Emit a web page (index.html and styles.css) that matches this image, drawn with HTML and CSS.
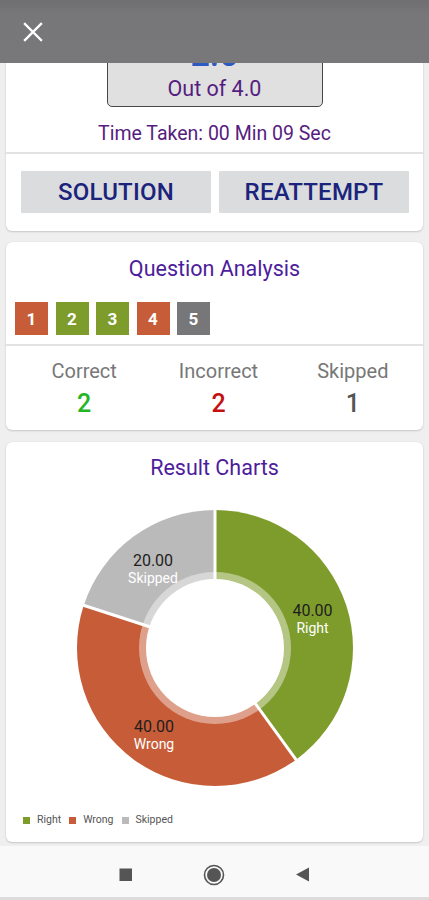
FILE: index.html
```html
<!DOCTYPE html>
<html lang="en">
<head>
<meta charset="utf-8">
<title>Result</title>
<link rel="stylesheet" href="styles.css">
</head>
<body>
<div class="screen">
  <header class="topbar">
    <button class="close" aria-label="Close">
      <svg width="20" height="20" viewBox="0 0 20 20"><path d="M2 2 L18 18 M18 2 L2 18" stroke="#fff" stroke-width="2.4" stroke-linecap="square" fill="none"/></svg>
    </button>
  </header>

  <main class="content">
    <section class="card card-score">
      <div class="scorebox">
        <div class="score">2.0</div>
        <div class="outof">Out of 4.0</div>
      </div>
      <div class="time">Time Taken: 00 Min 09 Sec</div>
      <div class="divider"></div>
      <div class="actions">
        <button class="btn">SOLUTION</button>
        <button class="btn">REATTEMPT</button>
      </div>
    </section>

    <section class="card card-analysis">
      <h2 class="card-title">Question Analysis</h2>
      <div class="qgrid">
        <span class="q q-wrong">1</span>
        <span class="q q-right">2</span>
        <span class="q q-right">3</span>
        <span class="q q-wrong">4</span>
        <span class="q q-skip">5</span>
      </div>
      <div class="divider"></div>
      <div class="stats">
        <div class="stat"><div class="stat-label">Correct</div><div class="stat-num num-correct">2</div></div>
        <div class="stat"><div class="stat-label">Incorrect</div><div class="stat-num num-incorrect">2</div></div>
        <div class="stat"><div class="stat-label">Skipped</div><div class="stat-num num-skipped">1</div></div>
      </div>
    </section>

    <section class="card card-chart">
      <h2 class="card-title">Result Charts</h2>
      <svg class="donut" width="417" height="332" viewBox="0 0 417 332">
        <path d="M209,168 L209,30 A138,138 0 0 1 290.11,279.64 Z" fill="#7e9c2c"/>
        <path d="M209,168 L290.11,279.64 A138,138 0 0 1 77.75,125.36 Z" fill="#c75c38"/>
        <path d="M209,168 L77.75,125.36 A138,138 0 0 1 209,30 Z" fill="#bbbaba"/>
        <g stroke="#fff" stroke-width="3">
          <line x1="209" y1="168" x2="209" y2="28"/>
          <line x1="209" y1="168" x2="291.3" y2="281.3"/>
          <line x1="209" y1="168" x2="75.9" y2="124.8"/>
        </g>
        <circle cx="209" cy="168" r="76" fill="#fff" fill-opacity="0.42"/>
        <circle cx="209" cy="168" r="69" fill="#fff"/>
        <g class="val">
          <text x="306.5" y="136">40.00</text>
          <text x="147" y="85.7">20.00</text>
          <text x="148" y="252">40.00</text>
        </g>
        <g class="lbl">
          <text x="306.5" y="153">Right</text>
          <text x="147" y="103">Skipped</text>
          <text x="148" y="269">Wrong</text>
        </g>
      </svg>
      <div class="legend">
        <span class="lg"><i class="sw sw-right"></i>Right</span>
        <span class="lg"><i class="sw sw-wrong"></i>Wrong</span>
        <span class="lg"><i class="sw sw-skip"></i>Skipped</span>
      </div>
    </section>
  </main>

  <nav class="navbar">
    <svg width="14" height="14" viewBox="0 0 14 14"><rect x="0.5" y="0.5" width="12.5" height="12.5" fill="#555"/></svg>
    <svg width="22" height="22" viewBox="0 0 22 22"><circle cx="11" cy="11" r="9.5" fill="none" stroke="#555" stroke-width="1.6"/><circle cx="11" cy="11" r="7" fill="#555"/></svg>
    <svg width="15" height="15" viewBox="0 0 15 15"><path d="M1 7.5 L14 0.5 L14 14.5 Z" fill="#555"/></svg>
  </nav>
</div>
</body>
</html>
```

FILE: styles.css
```css
* { box-sizing: border-box; }
html, body { margin: 0; padding: 0; }
body {
  font-family: Roboto, "Noto Sans", Arial, sans-serif;
  background: #efefef;
}
.screen {
  position: relative;
  width: 429px;
  height: 900px;
  display: flex;
  flex-direction: column;
  overflow: hidden;
  background: #efefef;
}
.topbar {
  position: absolute;
  left: 0; top: 0; right: 0;
  height: 63px;
  background: linear-gradient(#6f6f72 0px, #77777a 14px, #78787b 100%);
  display: flex;
  align-items: center;
  padding-left: 23px;
  z-index: 5;
}
.close {
  border: 0; background: none; padding: 0; margin: 0;
  width: 20px; height: 20px;
  display: block;
}
.close svg { display: block; }

.content {
  flex: 1;
  display: flex;
  flex-direction: column;
  gap: 11px;
  padding: 0 6px;
  overflow: hidden;
}
.card {
  background: #fff;
  border-radius: 6px;
  box-shadow: 0 1px 2px rgba(0,0,0,0.16), 0 0 1px rgba(0,0,0,0.12);
  flex-shrink: 0;
}
.card-score {
  border-top-left-radius: 0;
  border-top-right-radius: 0;
  padding-top: 25px;
}
.scorebox {
  width: 216px;
  margin: 0 auto;
  background: #e0e0e0;
  border: 1.5px solid #474747;
  border-radius: 5px;
  padding: 6px 0 5px;
  text-align: center;
}
.score {
  font-size: 34px;
  line-height: 45px;
  font-weight: 500;
  color: #2d59c2;
}
.outof {
  font-size: 21.5px;
  line-height: 24px;
  color: #561d80;
}
.time {
  margin-top: 15px;
  text-align: center;
  font-size: 19.5px;
  line-height: 24px;
  color: #561d80;
}
.divider {
  height: 1.5px;
  background: #e2e2e2;
}
.card-score .divider { margin-top: 6px; }
.actions {
  display: flex;
  gap: 8px;
  padding: 17.5px 14px 18px 15px;
}
.btn {
  flex: 1;
  height: 42px;
  border: 0;
  border-radius: 1px;
  background: #dadcdd;
  color: #1b237c;
  font-family: Roboto, Arial, sans-serif;
  font-size: 24px;
  font-weight: 500;
  letter-spacing: 0.2px;
  padding: 0;
}

.card-title {
  margin: 0;
  padding-top: 15px;
  text-align: center;
  font-size: 21.5px;
  line-height: 24px;
  font-weight: 400;
  color: #4d1c9c;
}
.qgrid {
  display: flex;
  gap: 7.5px;
  padding: 21px 0 0 9px;
}
.q {
  width: 33px;
  height: 33px;
  display: flex;
  align-items: center;
  justify-content: center;
  color: #fff;
  font-size: 17px;
  font-weight: 700;
}
.q-wrong { background: #c75c38; }
.q-right { background: #7e9c2c; }
.q-skip { background: #77777a; }
.card-analysis .divider { margin-top: 9px; }
.stats {
  display: grid;
  grid-template-columns: repeat(3, 1fr);
  padding: 13.5px 3px 11.5px 11px;
  text-align: center;
}
.stat-label {
  font-size: 20px;
  line-height: 24px;
  color: #777;
}
.stat-num {
  margin-top: 5.5px;
  font-size: 25px;
  line-height: 30px;
  font-weight: 500;
}
.num-correct { color: #23b523; }
.num-incorrect { color: #c41010; }
.num-skipped { color: #555; }

.card-chart { margin-top: 1px; }
.card-chart .card-title { padding-top: 14px; }
.donut { display: block; }
.donut text {
  font-family: Roboto, Arial, sans-serif;
  text-anchor: middle;
}
.val text { font-size: 16px; fill: #1e1e1e; }
.lbl text { font-size: 14px; fill: #fff; }
.legend {
  display: flex;
  align-items: center;
  gap: 8px;
  padding: 0 0 14px 17px;
  height: 30px;
  font-size: 10.5px;
  line-height: 16px;
  color: #555;
}
.lg { display: flex; align-items: center; gap: 7px; }
.sw { display: inline-block; width: 7px; height: 7px; }
.sw-right { background: #7e9c2c; }
.sw-wrong { background: #c75c38; }
.sw-skip { background: #bbbaba; }

.navbar {
  height: 54px;
  flex-shrink: 0;
  background: #f9f9f9;
  border-bottom: 3px solid #dcdcdc;
  display: flex;
  align-items: center;
  justify-content: center;
  gap: 70px;
  padding-top: 6px;
}
.navbar svg { display: block; }
```
